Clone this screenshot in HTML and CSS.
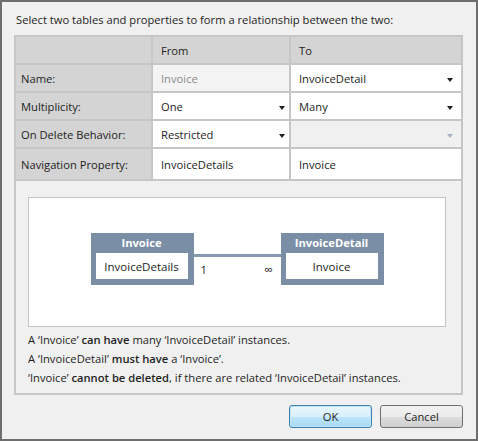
FILE: index.html
```html
<!DOCTYPE html>
<html>
<head>
<meta charset="utf-8">
<link rel="stylesheet" href="styles.css">
</head>
<body>
<div class="dialog">
  <div class="title">Select two tables and properties to form a relationship between the two:</div>
  <div class="grid">
    <div class="cell head"></div>
    <div class="cell head val">From</div>
    <div class="cell head val">To</div>

    <div class="cell label">Name:</div>
    <div class="cell val disabled">Invoice</div>
    <div class="cell val white drop drop3">InvoiceDetail<span class="arrow"></span></div>

    <div class="cell label">Multiplicity:</div>
    <div class="cell val white drop drop2">One<span class="arrow"></span></div>
    <div class="cell val white drop drop3">Many<span class="arrow"></span></div>

    <div class="cell label">On Delete Behavior:</div>
    <div class="cell val white drop drop2">Restricted<span class="arrow"></span></div>
    <div class="cell val empty drop drop3"><span class="arrow dim"></span></div>

    <div class="cell label">Navigation Property:</div>
    <div class="cell val white">InvoiceDetails</div>
    <div class="cell val white">Invoice</div>

    <div class="area">
      <div class="diagram">
        <div class="entity">
          <div class="ename">Invoice</div>
          <div class="eprop">InvoiceDetails</div>
        </div>
        <div class="conn">
          <div class="line"></div>
          <div class="ends"><span>1</span><span class="inf">∞</span></div>
        </div>
        <div class="entity">
          <div class="ename">InvoiceDetail</div>
          <div class="eprop">Invoice</div>
        </div>
      </div>
      <div class="desc">
        <div>A ‘Invoice’ <b>can have</b> many ‘InvoiceDetail’ instances.</div>
        <div>A ‘InvoiceDetail’ <b>must have</b> a ‘Invoice’.</div>
        <div>‘Invoice’ <b>cannot be deleted</b>, if there are related ‘InvoiceDetail’ instances.</div>
      </div>
    </div>
  </div>
  <div class="buttons">
    <div class="btn ok">OK</div>
    <div class="btn">Cancel</div>
  </div>
</div>
</body>
</html>
```
FILE: styles.css
```css
* { box-sizing: border-box; }
html, body { margin: 0; padding: 0; }
body {
  font-family: "Open Sans", "Noto Sans", sans-serif;
  font-size: 11.2px;
  color: #1e1e1e;
}
.dialog {
  width: 478px;
  height: 441px;
  border: 2px solid #6e6e6e;
  background: #f0f0f0;
  padding: 0 13px 0 12px;
}
.title {
  padding: 10px 0 0 2px;
  line-height: 16px;
  height: 33px;
  white-space: nowrap;
}
.grid {
  display: grid;
  grid-template-columns: 135px 136px 170px;
  grid-template-rows: 26px 26px 26px 26px 30px auto;
  gap: 2px;
  padding: 2px;
  background: #c6c6c6;
  width: 449px;
}
.cell {
  display: flex;
  align-items: center;
  white-space: nowrap;
}
.head { background: #d4d4d4; }
.label { background: #d4d4d4; padding-left: 5px; }
.val { padding-left: 8px; }
.white { background: #ffffff; }
.disabled { background: #f4f4f4; color: #8a8a8a; }
.empty { background: #f0f0f0; }
.drop { justify-content: space-between; }
.drop2 { padding-right: 4px; }
.drop3 { padding-right: 8px; }
.arrow {
  width: 0;
  height: 0;
  border-left: 3.5px solid transparent;
  border-right: 3.5px solid transparent;
  border-top: 4px solid #1e1e1e;
  margin-top: 3px;
}
.arrow.dim { border-top-color: #a8b2c4; margin-left: auto; }
.area {
  grid-column: 1 / 4;
  background: #f0f0f0;
  padding: 16px 15px 6px 12px;
}
.diagram {
  height: 130px;
  background: #ffffff;
  border: 1px solid #c4c4c4;
  display: flex;
  justify-content: center;
  align-items: center;
  padding-bottom: 6px;
}
.entity {
  width: 103px;
  background: #7a8ea6;
  padding: 0 6px 6px 5px;
}
.ename {
  height: 20px;
  line-height: 20px;
  text-align: center;
  color: #ffffff;
  font-weight: bold;
}
.eprop {
  height: 26px;
  background: #ffffff;
  display: flex;
  align-items: center;
  justify-content: center;
  font-size: 11.5px;
}
.conn {
  width: 87px;
  height: 52px;
}
.line {
  margin-top: 21px;
  height: 3px;
  background: #8599b0;
}
.ends {
  display: flex;
  justify-content: space-between;
  padding: 5px 8px 0 7px;
  line-height: 16px;
}
.inf { font-size: 12px; }
.desc {
  margin-top: 3px;
  line-height: 19px;
  white-space: nowrap;
}
.desc b { font-weight: 600; }
.buttons {
  display: flex;
  justify-content: flex-end;
  gap: 8px;
  margin-top: 10px;
}
.btn {
  width: 83px;
  height: 23px;
  border: 1px solid #707070;
  border-radius: 3px;
  background: linear-gradient(#f2f2f2 0%, #ebebeb 50%, #dddddd 51%, #cfcfcf 100%);
  display: flex;
  align-items: center;
  justify-content: center;
}
.btn.ok {
  border-color: #3c7fb1;
  background: linear-gradient(#eaf6fd 0%, #d9f0fc 50%, #bee6fd 51%, #a7d9f5 100%);
  box-shadow: inset 0 0 0 1px #c0e4f8;
}
```
